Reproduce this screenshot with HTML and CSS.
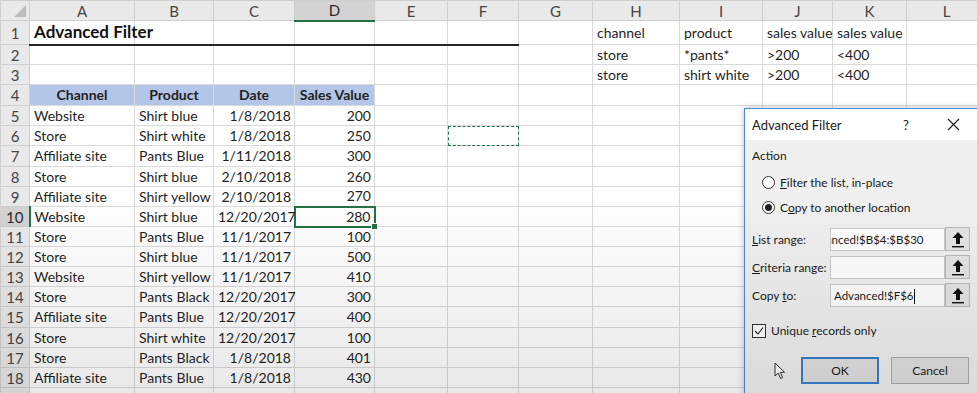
FILE: index.html
```html
<!DOCTYPE html>
<html lang="en">
<head>
    <meta charset="UTF-8">
    <meta name="viewport" content="width=device-width, initial-scale=1.0">
    <title>Advanced Filter - Excel</title>
    <link rel="stylesheet" href="styles.css">
</head>
<body>

    <table class="grid">
        <colgroup>
            <col class="w-hd"><col class="w-a"><col class="w-b"><col class="w-c"><col class="w-d"><col class="w-e">
            <col class="w-f"><col class="w-g"><col class="w-h"><col class="w-i"><col class="w-j"><col class="w-k"><col class="w-l">
        </colgroup>
        <tr class="col-heads">
            <th class="corner"><span class="tri"></span></th>
            <th>A</th><th>B</th><th>C</th><th class="sel">D</th><th>E</th><th>F</th>
            <th>G</th><th>H</th><th>I</th><th>J</th><th>K</th><th>L</th>
        </tr>
        <tr class="r-title">
            <th>1</th>
            <td class="title line">Advanced Filter</td><td class="line"></td><td class="line"></td><td class="line"></td><td class="line"></td><td class="line"></td>
            <td></td><td>channel</td><td>product</td><td>sales value</td><td>sales value</td><td></td>
        </tr>
        <tr>
            <th>2</th>
            <td></td><td></td><td></td><td></td><td></td><td></td>
            <td></td><td>store</td><td>*pants*</td><td>&gt;200</td><td>&lt;400</td><td></td>
        </tr>
        <tr>
            <th>3</th>
            <td></td><td></td><td></td><td></td><td></td><td></td>
            <td></td><td>store</td><td>shirt white</td><td>&gt;200</td><td>&lt;400</td><td></td>
        </tr>
        <tr class="r-head">
            <th>4</th>
            <td class="fill">Channel</td><td class="fill">Product</td><td class="fill">Date</td><td class="fill">Sales Value</td>
            <td></td><td></td><td></td><td></td><td></td><td></td><td></td><td></td>
        </tr>
        <tr>
            <th>5</th>
            <td>Website</td><td>Shirt blue</td><td class="num">1/8/2018</td><td class="num">200</td>
            <td></td><td></td><td></td><td></td><td></td><td></td><td></td><td></td>
        </tr>
        <tr>
            <th>6</th>
            <td>Store</td><td>Shirt white</td><td class="num">1/8/2018</td><td class="num">250</td>
            <td></td><td class="copy-src"></td><td></td><td></td><td></td><td></td><td></td><td></td>
        </tr>
        <tr class="tall">
            <th>7</th>
            <td>Affiliate site</td><td>Pants Blue</td><td class="num">1/11/2018</td><td class="num">300</td>
            <td></td><td></td><td></td><td></td><td></td><td></td><td></td><td></td>
        </tr>
        <tr>
            <th>8</th>
            <td>Store</td><td>Shirt blue</td><td class="num">2/10/2018</td><td class="num">260</td>
            <td></td><td></td><td></td><td></td><td></td><td></td><td></td><td></td>
        </tr>
        <tr>
            <th>9</th>
            <td>Affiliate site</td><td>Shirt yellow</td><td class="num">2/10/2018</td><td class="num">270</td>
            <td></td><td></td><td></td><td></td><td></td><td></td><td></td><td></td>
        </tr>
        <tr>
            <th class="sel">10</th>
            <td>Website</td><td>Shirt blue</td><td class="num">12/20/2017</td><td class="num active">280<span class="handle"></span></td>
            <td></td><td></td><td></td><td></td><td></td><td></td><td></td><td></td>
        </tr>
        <tr>
            <th>11</th>
            <td>Store</td><td>Pants Blue</td><td class="num">11/1/2017</td><td class="num">100</td>
            <td></td><td></td><td></td><td></td><td></td><td></td><td></td><td></td>
        </tr>
        <tr>
            <th>12</th>
            <td>Store</td><td>Shirt blue</td><td class="num">11/1/2017</td><td class="num">500</td>
            <td></td><td></td><td></td><td></td><td></td><td></td><td></td><td></td>
        </tr>
        <tr>
            <th>13</th>
            <td>Website</td><td>Shirt yellow</td><td class="num">11/1/2017</td><td class="num">410</td>
            <td></td><td></td><td></td><td></td><td></td><td></td><td></td><td></td>
        </tr>
        <tr>
            <th>14</th>
            <td>Store</td><td>Pants Black</td><td class="num">12/20/2017</td><td class="num">300</td>
            <td></td><td></td><td></td><td></td><td></td><td></td><td></td><td></td>
        </tr>
        <tr class="tall">
            <th>15</th>
            <td>Affiliate site</td><td>Pants Blue</td><td class="num">12/20/2017</td><td class="num">400</td>
            <td></td><td></td><td></td><td></td><td></td><td></td><td></td><td></td>
        </tr>
        <tr>
            <th>16</th>
            <td>Store</td><td>Shirt white</td><td class="num">12/20/2017</td><td class="num">100</td>
            <td></td><td></td><td></td><td></td><td></td><td></td><td></td><td></td>
        </tr>
        <tr>
            <th>17</th>
            <td>Store</td><td>Pants Black</td><td class="num">1/8/2018</td><td class="num">401</td>
            <td></td><td></td><td></td><td></td><td></td><td></td><td></td><td></td>
        </tr>
        <tr>
            <th>18</th>
            <td>Affiliate site</td><td>Pants Blue</td><td class="num">1/8/2018</td><td class="num">430</td>
            <td></td><td></td><td></td><td></td><td></td><td></td><td></td><td></td>
        </tr>
        <tr>
            <th>19</th>
            <td></td><td>Shirt blue</td><td class="num">12/20/2017</td><td></td>
            <td></td><td></td><td></td><td></td><td></td><td></td><td></td><td></td>
        </tr>
    </table>

    <!-- Advanced Filter dialog -->
    <div class="dialog">
        <div class="dlg-title">
            <span class="dlg-name">Advanced Filter</span>
            <span class="dlg-help">?</span>
            <span class="dlg-close">
                <svg width="13" height="13" viewBox="0 0 13 13"><path d="M1 1 L12 12 M12 1 L1 12" stroke="#222" stroke-width="1.2"/></svg>
            </span>
        </div>
        <div class="dlg-body">
            <div class="group-label">Action</div>
            <div class="option first"><span class="radio"></span><span><u>F</u>ilter the list, in-place</span></div>
            <div class="option"><span class="radio on"></span><span>C<u>o</u>py to another location</span></div>

            <div class="field first">
                <span class="field-label"><u>L</u>ist range:</span>
                <span class="field-input"><span class="scrolled">Advanced!$B$4:$B$30</span></span>
                <span class="ref-btn"><svg width="14" height="17" viewBox="0 0 14 17"><path d="M7 1 L12.5 7 H9 V13 H5 V7 H1.5 Z" fill="#111"/><rect x="1" y="15" width="12" height="1.4" fill="#111"/></svg></span>
            </div>
            <div class="field">
                <span class="field-label"><u>C</u>riteria range:</span>
                <span class="field-input"></span>
                <span class="ref-btn"><svg width="14" height="17" viewBox="0 0 14 17"><path d="M7 1 L12.5 7 H9 V13 H5 V7 H1.5 Z" fill="#111"/><rect x="1" y="15" width="12" height="1.4" fill="#111"/></svg></span>
            </div>
            <div class="field">
                <span class="field-label">Copy <u>t</u>o:</span>
                <span class="field-input">Advanced!$F$6<span class="caret"></span></span>
                <span class="ref-btn"><svg width="14" height="17" viewBox="0 0 14 17"><path d="M7 1 L12.5 7 H9 V13 H5 V7 H1.5 Z" fill="#111"/><rect x="1" y="15" width="12" height="1.4" fill="#111"/></svg></span>
            </div>

            <div class="check-row">
                <span class="checkbox"><svg width="12" height="12" viewBox="0 0 12 12"><path d="M2 6 L5 9 L10 2.5" fill="none" stroke="#222" stroke-width="1.1"/></svg></span>
                <span>Unique <u>r</u>ecords only</span>
            </div>

            <div class="buttons">
                <span class="pointer"><svg width="14" height="18" viewBox="0 0 14 18"><path d="M1 1 V14 L4.2 11 L6.6 16.5 L8.6 15.6 L6.3 10.3 H10.6 Z" fill="#fff" stroke="#333" stroke-width="1"/></svg></span>
                <button class="btn default">OK</button>
                <button class="btn">Cancel</button>
            </div>
        </div>
    </div>

    <div class="shade"></div>

</body>
</html>
```

FILE: styles.css
```css
body {
    margin: 0;
    width: 977px;
    height: 393px;
    overflow: hidden;
    position: relative;
    background: #fff;
    font-family: "Lato", "Liberation Sans", sans-serif;
    color: #1f1f1f;
}

/* worksheet */
.grid {
    border-collapse: collapse;
    table-layout: fixed;
    width: 986px;
    font-size: 14px;
}

.w-hd { width: 29px; }
.w-a { width: 105px; }
.w-b { width: 79px; }
.w-c { width: 81px; }
.w-d { width: 80px; }
.w-e { width: 73px; }
.w-f { width: 71px; }
.w-g { width: 74px; }
.w-h { width: 87px; }
.w-i { width: 83px; }
.w-j { width: 70px; }
.w-k { width: 74px; }
.w-l { width: 80px; }

.grid tr { height: 20px; }
.grid tr.tall { height: 21px; }
.grid tr.r-title { height: 24px; }
.grid tr.r-head { height: 21px; }

.grid td {
    border: 1px solid #dadada;
    padding: 0 3px 0 4px;
    white-space: nowrap;
    overflow: visible;
    line-height: 18px;
}

.grid th {
    background: #e9e9e9;
    border: 1px solid #cfcfcf;
    color: #444;
    font-size: 15px;
    font-weight: normal;
    padding: 0;
    line-height: 18px;
}

.grid th.sel {
    background: #d3d3d3;
    color: #2b2b2b;
}

.col-heads th.sel { border-bottom: 2px solid #217346; }
.grid tr th.sel:first-child { border-right: 2px solid #217346; }

.corner { position: relative; }

.tri {
    position: absolute;
    right: 3px;
    bottom: 3px;
    width: 0;
    height: 0;
    border-left: 12px solid transparent;
    border-bottom: 12px solid #bdbdbd;
}

.grid td.title {
    font-size: 17px;
    font-weight: bold;
    color: #111;
}

.grid td.line { border-bottom: 2px solid #262626; }

.grid td.fill {
    background: #b4c6e7;
    font-weight: bold;
    text-align: center;
    padding: 0 2px;
}

.grid td.num { text-align: right; }

.grid td.active {
    position: relative;
    border: 2px solid #217346;
}

.handle {
    position: absolute;
    right: -4px;
    bottom: -4px;
    width: 5px;
    height: 5px;
    background: #217346;
    border: 1px solid #fff;
}

.grid td.copy-src { outline: 1px dashed #217346; outline-offset: -1px; }

/* dialog */
.dialog {
    position: absolute;
    left: 744px;
    top: 108px;
    width: 240px;
    height: 300px;
    border: 1px solid #4d8ad4;
    background: #f0f0f0;
    font-family: "Lato", "Noto Sans", sans-serif;
    font-size: 12px;
    color: #1a1a1a;
    box-shadow: 0 0 6px rgba(0, 0, 0, 0.25);
}

.dlg-title {
    height: 31px;
    background: #fff;
    display: flex;
    align-items: center;
    padding-left: 7px;
}

.dlg-name { font-size: 13px; width: 151px; }
.dlg-help { font-size: 13px; width: 44px; }
.dlg-close { display: flex; }

.dlg-body { padding: 8px 0 0 7px; }

.group-label { height: 16px; line-height: 16px; }

.option {
    display: flex;
    align-items: center;
    gap: 5px;
    height: 25px;
    padding-left: 10px;
}

.option.first { margin-top: 6px; }

.radio {
    width: 11px;
    height: 11px;
    border: 1px solid #333;
    border-radius: 50%;
    background: #fff;
    display: flex;
    align-items: center;
    justify-content: center;
}

.radio.on::after {
    content: "";
    width: 7px;
    height: 7px;
    border-radius: 50%;
    background: #222;
}

.field {
    display: flex;
    align-items: center;
    height: 24px;
    margin-top: 4px;
}

.field.first { margin-top: 7px; }

.field-label { width: 78px; white-space: nowrap; }

.field-input {
    width: 115px;
    height: 23px;
    line-height: 22px;
    background: #fff;
    border: 1px solid #c9c9c9;
    overflow: hidden;
    white-space: nowrap;
    padding-left: 3px;
    box-sizing: border-box;
    font-size: 11.5px;
}

.scrolled { display: inline-block; text-indent: -28px; }

.caret {
    display: inline-block;
    width: 1px;
    height: 15px;
    background: #111;
    vertical-align: middle;
}

.ref-btn {
    width: 25px;
    height: 24px;
    box-sizing: border-box;
    border: 1px solid #b9b9b9;
    background: #e4e4e4;
    display: flex;
    align-items: center;
    justify-content: center;
}

.check-row {
    display: flex;
    align-items: center;
    gap: 5px;
    margin-top: 16px;
}

.checkbox {
    width: 12px;
    height: 12px;
    border: 1px solid #333;
    background: #fff;
    display: flex;
}

.buttons {
    display: flex;
    align-items: center;
    margin-top: 19px;
}

.pointer { width: 49px; padding-left: 22px; box-sizing: border-box; display: flex; }

.btn {
    font-family: inherit;
    font-size: 12px;
    width: 78px;
    height: 27px;
    background: #e1e1e1;
    border: 1px solid #adadad;
    color: #1a1a1a;
    margin-right: 12px;
    padding: 0;
}

.btn.default { border: 2px solid #3a7fd0; }

/* video fade at the bottom */
.shade {
    position: absolute;
    inset: 0;
    pointer-events: none;
    background: linear-gradient(to bottom, rgba(0, 0, 0, 0) 50%, rgba(0, 0, 0, 0.09) 100%);
}
```
